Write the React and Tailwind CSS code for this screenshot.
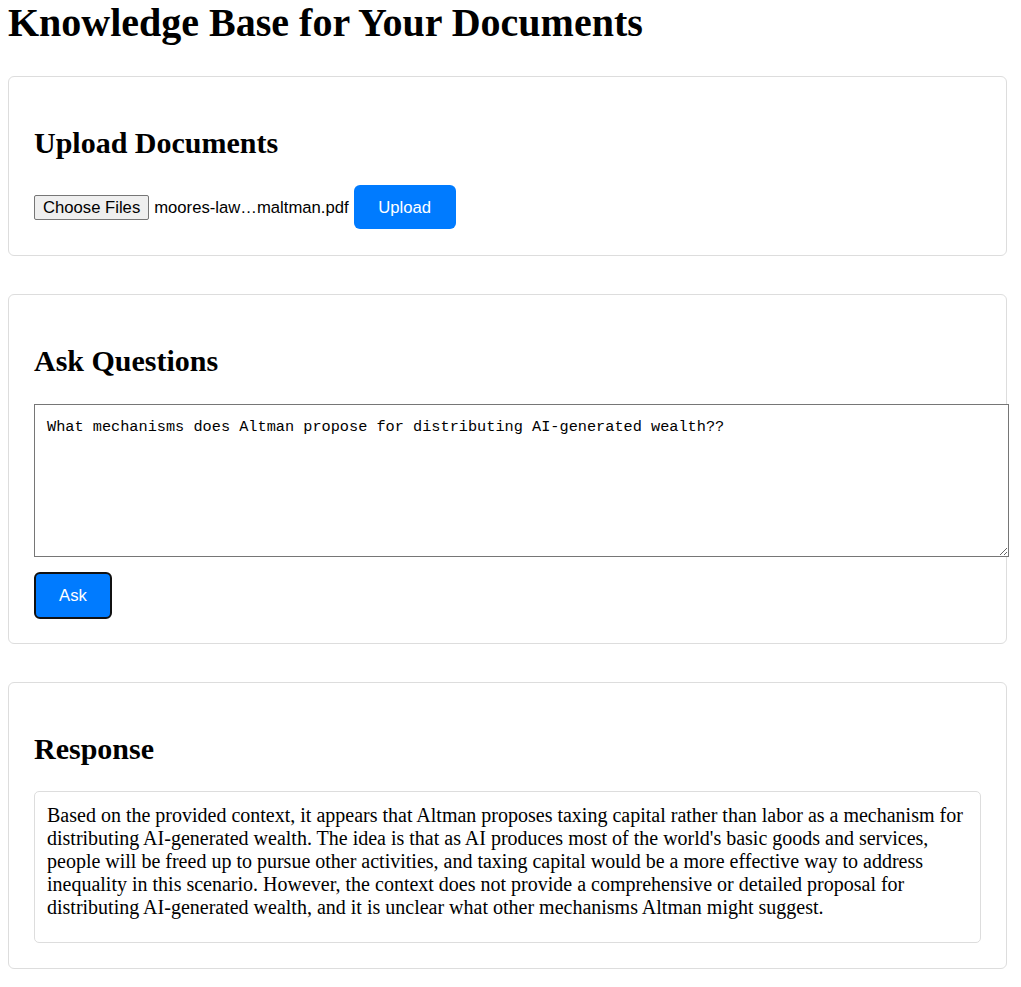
const serif = { fontFamily: '"Liberation Serif", "Times New Roman", serif' };
const sans = { fontFamily: '"Liberation Sans", Arial, sans-serif' };

function Card({ title, pad, children }) {
  return (
    <section
      className={
        "w-[999px] border border-[#dddddd] rounded-[6px] px-[25px] pt-[25px] bg-white " + pad
      }
    >
      <h2 className="mt-[24px] mb-[24px] text-[30px] leading-[34.5px] font-bold text-black">
        {title}
      </h2>
      {children}
    </section>
  );
}

export default function App() {
  return (
    <div className="min-h-screen bg-white text-black" style={serif}>
      <div className="ml-[8px] flex flex-col">
        <h1 className="m-0 text-[40px] leading-[46px] font-bold">
          Knowledge Base for Your Documents
        </h1>

        <div className="mt-[30px] flex flex-col gap-[38px] pb-[20px]">
          <Card title="Upload Documents" pad="pb-[25px]">
            <div className="flex items-center h-[45px] text-[16.67px]" style={sans}>
              <span className="h-[25px] flex items-center px-[8px] bg-[#efefef] border border-[#767676] rounded-[2px] text-black">
                Choose Files
              </span>
              <span className="ml-[5px] text-black">moores-law…maltman.pdf</span>
              <button className="ml-[5px] h-[44px] w-[102px] bg-[#007bff] text-white rounded-[6px] text-[16.67px]">
                Upload
              </button>
            </div>
          </Card>

          <Card title="Ask Questions" pad="pb-[24px]">
            <div className="pt-[2px] flex flex-col items-start gap-[15px]">
              <textarea
                className="block w-[975px] h-[153px] border border-[#767676] px-[12px] pt-[13px] pb-[11px] text-[15.25px] leading-[19.5px] text-black bg-white resize-y outline-none"
                style={{ fontFamily: '"Liberation Mono", "DejaVu Sans Mono", monospace' }}
                defaultValue="What mechanisms does Altman propose for distributing AI-generated wealth??"
              />
              <button
                className="h-[47px] w-[78px] bg-[#007bff] text-white border-2 border-[#111111] rounded-[6px] text-[16.67px]"
                style={sans}
              >
                Ask
              </button>
            </div>
          </Card>

          <Card title="Response" pad="pb-[25px]">
            <div className="border border-[#dddddd] rounded-[5px] pl-[12px] pr-[10px] pt-[12px] pb-[23px] text-[20px] leading-[23px]">
              Based on the provided context, it appears that Altman proposes taxing capital rather
              than labor as a mechanism for distributing AI-generated wealth. The idea is that as AI
              produces most of the world's basic goods and services, people will be freed up to
              pursue other activities, and taxing capital would be a more effective way to address
              inequality in this scenario. However, the context does not provide a comprehensive or
              detailed proposal for distributing AI-generated wealth, and it is unclear what other
              mechanisms Altman might suggest.
            </div>
          </Card>
        </div>
      </div>
    </div>
  );
}
